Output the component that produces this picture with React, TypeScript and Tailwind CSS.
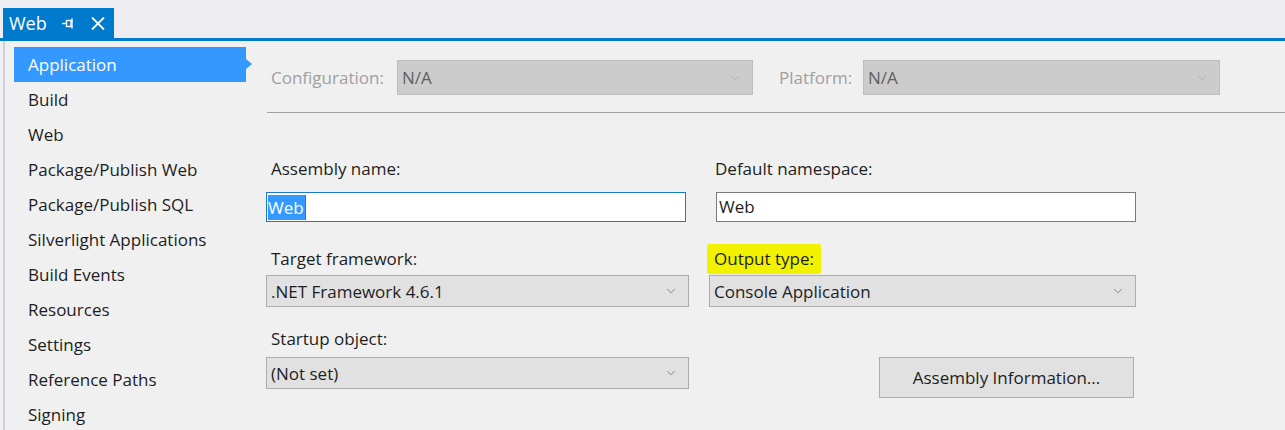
import { ChevronDown } from "lucide-react";

const font = { fontFamily: '"Segoe UI", "Open Sans", "Noto Sans", sans-serif' };

const navItems = [
  "Application",
  "Build",
  "Web",
  "Package/Publish Web",
  "Package/Publish SQL",
  "Silverlight Applications",
  "Build Events",
  "Resources",
  "Settings",
  "Reference Paths",
  "Signing",
];

function Combo({ value, width, disabled }: { value: string; width: string; disabled?: boolean }) {
  return (
    <div
      className={`${width} flex items-center justify-between pl-[4px] pr-[10px] border ${
        disabled ? "h-[35px] bg-[#cccccc] border-[#bdbdbd] text-[#5f5f5f]" : "h-[32px] bg-[#e1e1e1] border-[#adadad] text-[#1e1e1e]"
      }`}
    >
      <span className="text-[17px] leading-none">{value}</span>
      <ChevronDown size={14} strokeWidth={1.2} className={disabled ? "text-[#a8a8a8]" : "text-[#606060]"} />
    </div>
  );
}

export default function App() {
  return (
    <div className="w-[1285px] h-[430px] overflow-hidden bg-[#f0f0f0] text-[#1e1e1e]" style={font}>
      {/* document tab strip */}
      <div className="h-[8px] bg-[#eeeef2]" />
      <div className="h-[30px] pl-[3px] flex bg-[#eeeef2]">
        <div className="w-[111px] bg-[#007acc] flex items-center pl-[6px] text-white">
          <span className="text-[18px] leading-none">Web</span>
          <svg width="13" height="11" viewBox="0 0 13 11" className="ml-[15px]" fill="none" stroke="white" strokeWidth="1.4">
            <path d="M0 5.5h4.5" />
            <rect x="4.5" y="2.5" width="4.5" height="6" />
            <path d="M10 0.5v10" />
          </svg>
          <svg width="14" height="13" viewBox="0 0 14 13" className="ml-[16px]" fill="none" stroke="white" strokeWidth="1.8">
            <path d="M1 0.5l12 12M13 0.5l-12 12" />
          </svg>
        </div>
      </div>
      <div className="h-[3px] bg-[#007acc]" />

      <div className="flex ml-[3px] border-l-2 border-[#cfd0dc] h-[389px]">
        {/* property pages list */}
        <div className="w-[245px] pt-[6px] pl-[9px] shrink-0">
          {navItems.map((item, i) => (
            <div
              key={item}
              className={`relative h-[35px] flex items-center pl-[14px] text-[17px] ${
                i === 0 ? "w-[232px] bg-[#3399ff] text-white" : "text-[#1e1e1e]"
              }`}
            >
              {item}
              {i === 0 && (
                <span className="absolute right-[-6px] top-[12px] w-0 h-0 border-y-[5px] border-y-transparent border-l-[6px] border-l-[#3399ff]" />
              )}
            </div>
          ))}
        </div>

        {/* page content */}
        <div className="flex-1">
          <div className="pt-[19px] flex items-center text-[17px]">
            <span className="ml-[21px] w-[126px] text-[#a0a0a0]">Configuration:</span>
            <Combo value="N/A" width="w-[356px]" disabled />
            <span className="ml-[26px] w-[84px] text-[#a0a0a0]">Platform:</span>
            <Combo value="N/A" width="w-[357px]" disabled />
          </div>
          <div className="mt-[17px] ml-[17px] h-px bg-[#a0a0a0]" />

          <div className="ml-[16px] flex gap-[20px] text-[17px]">
            {/* left column */}
            <div className="w-[423px]">
              <div className="mt-[45px] h-[22px] leading-[22px] pl-[5px]">Assembly name:</div>
              <div className="mt-[12px] w-[420px] h-[30px] bg-white border border-[#1979ca] flex items-center pl-[1px]">
                <span className="bg-[#3399ff] text-white h-[25px] leading-[25px] pr-[1px]">Web</span>
                <span className="w-px h-[25px] bg-[#b35a00]" />
              </div>
              <div className="mt-[26px] h-[22px] leading-[22px] pl-[5px]">Target framework:</div>
              <div className="mt-[5px]">
                <Combo value=".NET Framework 4.6.1" width="w-[423px]" />
              </div>
              <div className="mt-[21px] h-[22px] leading-[22px] pl-[5px]">Startup object:</div>
              <div className="mt-[7px]">
                <Combo value="(Not set)" width="w-[423px]" />
              </div>
            </div>

            {/* right column */}
            <div className="w-[427px]">
              <div className="mt-[45px] h-[22px] leading-[22px] pl-[6px]">Default namespace:</div>
              <div className="mt-[12px] ml-[7px] w-[420px] h-[30px] bg-white border border-[#7a7a7a] flex items-center pl-[2px]">
                Web
              </div>
              <div className="mt-[26px] h-[22px] leading-[22px]">
                <span className="inline-block -ml-[2px] -mt-[4px] px-[7px] py-[4px] leading-[22px] bg-[#f2f200] rounded-[2px]">
                  Output type:
                </span>
              </div>
              <div className="mt-[5px]">
                <Combo value="Console Application" width="w-[427px]" />
              </div>
              <div className="mt-[50px] ml-[170px] w-[255px] h-[41px] bg-[#e1e1e1] border border-[#adadad] flex items-center justify-center">
                Assembly Information...
              </div>
            </div>
          </div>
        </div>
      </div>
    </div>
  );
}
